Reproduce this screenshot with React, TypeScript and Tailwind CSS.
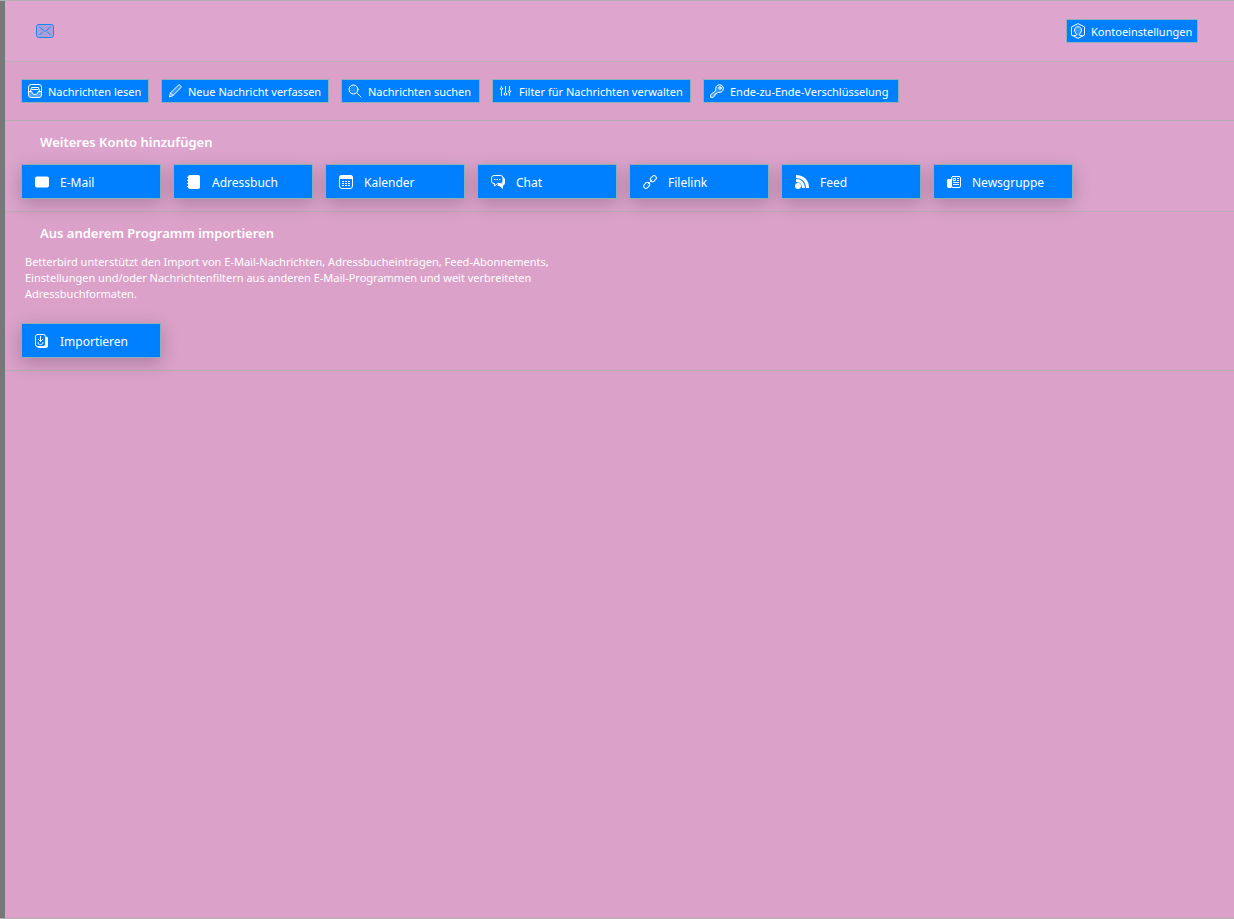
import { FC, ReactNode } from 'react';

interface IconProps {
    size?: number;
    children: ReactNode;
}

const Icon: FC<IconProps> = ({ size = 14, children }) => (
    <svg
        width={size}
        height={size}
        viewBox="0 0 14 14"
        fill="none"
        stroke="currentColor"
        strokeLinecap="round"
        strokeLinejoin="round"
        className="shrink-0"
        aria-hidden="true"
    >
        {children}
    </svg>
);

const InboxIcon = () => (
    <Icon>
        <rect x=".5" y=".5" width="13" height="13" rx="2.5" />
        <path d="M1 7.5h3c.2 2 1.4 3 3 3s2.800-1 3-3h3v4.500l-1.500 1.500h-9L1 12z" fill="currentColor" fillOpacity=".3" stroke="none" />
        <path d="M.8 7.500h3c.3 2 1.500 3 3.200 3s2.900-1 3.200-3h3M2.500 7l1-3.500h7l1 3.500M4 5.500h6" />
    </Icon>
);

const PencilIcon = () => (
    <Icon>
        <path d="M1.500 12.500l1-3.500 7.700-7.700c.6-.6 1.400-.6 2 0l.5.500c.6.600.6 1.400 0 2L5 11.500zM2.500 9L5 11.500" fill="currentColor" fillOpacity=".2" />
    </Icon>
);

const SearchIcon = () => (
    <Icon>
        <circle cx="5.500" cy="5.500" r="4.500" fill="currentColor" fillOpacity=".1" />
        <path d="M9 9l4 4" />
    </Icon>
);

const FilterIcon = () => (
    <Icon>
        <path d="M2.500 2.500v1M2.500 6v5.500M6.500 2.500v6M10.500 2.500v4M10.500 9v2.500" />
        <circle cx="2.500" cy="4.700" r="1.100" />
        <circle cx="6.500" cy="10" r="1.300" />
        <circle cx="10.500" cy="7.500" r="1.100" />
    </Icon>
);

const KeyIcon = () => (
    <Icon>
        <path d="M5.700 6.300C5.100 3.500 6.700.7 9.500.7c2.200 0 3.900 1.700 3.900 3.900 0 2.700-2.600 4.300-5.300 3.700L7 9.400H5.700v1.400H4.300v1.500l-1 1H.7v-2.200z" fill="currentColor" fillOpacity=".2" />
        <circle cx="10" cy="4" r="1.200" />
    </Icon>
);

const AccountIcon = () => (
    <svg width="14" height="16" viewBox="0 0 14 16" fill="none" stroke="currentColor" strokeLinejoin="round" className="shrink-0" aria-hidden="true">
        <path d="M7 .6l6.500 3.300v8.200L7 15.400.5 12.100V3.900z" />
        <path d="M2.500 12.500h2.500c.8-.3.900-1 .4-1.500C4.200 9.800 3.600 8.500 3.600 7c0-2 1.300-3.300 3.400-3.300S10.400 5 10.400 7c0 1.500-.6 2.800-1.800 4-.5.500-.4 1.200.4 1.500h2.500" fill="currentColor" fillOpacity=".2" />
    </svg>
);

const MailIcon = () => (
    <Icon>
        <rect y="1.500" width="14" height="11" rx="2" fill="currentColor" stroke="none" />
    </Icon>
);

const AddressBookIcon = () => (
    <Icon>
        <rect x="1" width="12" height="14" rx="2" fill="currentColor" stroke="none" />
        <path d="M.5 2.500h1M.5 5.500h1M.5 8.500h1M.5 11.500h1" />
    </Icon>
);

const CalendarIcon = () => (
    <Icon>
        <rect x=".5" y=".5" width="13" height="13" rx="2.500" />
        <path d="M0 4V3a3 3 0 013-3h8a3 3 0 013 3v1z" fill="currentColor" stroke="none" />
        <path d="M3 6.500h2M6 6.500h2M9 6.500h2M3 8.500h2M6 8.500h2M9 8.500h2M3 10.500h2M6 10.500h2M9 10.500h2" strokeLinecap="butt" />
    </Icon>
);

const ChatIcon = () => (
    <Icon>
        <path d="M12 2c1.300.5 2 1.500 2 3v2.500c0 1.700-.8 2.700-2 3V14l-3.500-3H6.500l.7-2H10c1.500 0 2-1 2-2.500z" fill="currentColor" stroke="none" />
        <path d="M3 .5h6.500A2.500 2.500 0 0112 3v3a2.500 2.500 0 01-2.500 2.500h-3L3.500 11V8.500H3A2.500 2.500 0 01.5 6V3A2.500 2.500 0 013 .5z" />
        <path d="M3 4.500h1.500M5.500 4.500H7M8 4.500h1.500" strokeLinecap="butt" />
    </Icon>
);

const LinkIcon = () => (
    <Icon>
        <rect x="-3.300" y="-2.200" width="6.600" height="4.400" rx="2.200" transform="translate(10.300 3.700) rotate(-45)" />
        <rect x="-3.300" y="-2.200" width="6.600" height="4.400" rx="2.200" transform="translate(3.700 10.300) rotate(-45)" />
        <path d="M5 9l4-4" />
    </Icon>
);

const FeedIcon = () => (
    <Icon>
        <circle cx="3" cy="11" r="3" fill="currentColor" stroke="none" />
        <path d="M1 5.500c4.700 0 7.500 2.800 7.500 7.500M1 1.500C8 1.500 12.500 6 12.500 13" strokeWidth="3" strokeLinecap="butt" />
    </Icon>
);

const NewsIcon = () => (
    <Icon>
        <path d="M4 4H1.500C.6 4 0 4.600 0 5.500V11c0 1.200.8 2 2 2h2.500z" fill="currentColor" stroke="none" />
        <rect x="4.500" y="1.500" width="9" height="11" rx="1.500" />
        <rect x="6.500" y="3.500" width="2" height="2" />
        <path d="M10 3.500h2M10 5.500h2M6 7.500h6M6 9.500h6" strokeLinecap="butt" />
    </Icon>
);

const ImportIcon = () => (
    <Icon>
        <path d="M11 2.500c1.300 0 2 .8 2 2V12c0 1.200-.8 2-2 2H4c-1.200 0-2-.7-2-2h7c1.300 0 2-.8 2-2z" fill="currentColor" stroke="none" />
        <rect x=".5" y=".5" width="10" height="12" rx="2" />
        <path d="M5.500 2.500v5M3.500 5.500l2 2 2-2M3 8.500c0 1.300.7 2 2.500 2s2.500-.7 2.500-2" />
    </Icon>
);

const QUICK_ACTIONS = [
    { label: 'Nachrichten lesen', icon: <InboxIcon />, width: 'w-[128px]' },
    { label: 'Neue Nachricht verfassen', icon: <PencilIcon />, width: 'w-[168px]' },
    { label: 'Nachrichten suchen', icon: <SearchIcon />, width: 'w-[139px]' },
    { label: 'Filter für Nachrichten verwalten', icon: <FilterIcon />, width: 'w-[199px]' },
    { label: 'Ende-zu-Ende-Verschlüsselung', icon: <KeyIcon />, width: 'w-[196px]' },
];

const ACCOUNT_TYPES = [
    { label: 'E-Mail', icon: <MailIcon /> },
    { label: 'Adressbuch', icon: <AddressBookIcon /> },
    { label: 'Kalender', icon: <CalendarIcon /> },
    { label: 'Chat', icon: <ChatIcon /> },
    { label: 'Filelink', icon: <LinkIcon /> },
    { label: 'Feed', icon: <FeedIcon /> },
    { label: 'Newsgruppe', icon: <NewsIcon /> },
];

interface TileProps {
    label: string;
    icon: ReactNode;
}

const Tile: FC<TileProps> = ({ label, icon }) => (
    <button
        type="button"
        className="flex h-[35px] w-[140px] items-center gap-[11px] border border-[#8fb0b8] bg-[#0080ff] pl-[13px] text-xs whitespace-nowrap shadow-[0_5px_18px_rgba(0,0,0,0.22)]"
    >
        {icon}
        <span className="pt-0.5">{label}</span>
    </button>
);

export default function App() {
    return (
        <div className="flex min-h-screen border-y border-[#b0b0b0] bg-[#dba1c9] font-['Noto_Sans','Open_Sans',sans-serif] text-white">
            <div className="w-[5px] shrink-0 bg-[#77787a]" />
            <main className="min-w-0 flex-1">
                <header className="flex h-[61px] items-center justify-between border-b border-[#bdabb7] bg-[#dea6cf] pr-9 pl-[31px]">
                    <svg width="18" height="14" viewBox="0 0 18 14" fill="none" stroke="#1a86f8" strokeLinecap="round" role="img" aria-label="E-Mail-Konto">
                        <rect x=".5" y=".5" width="17" height="13" rx="2" fill="#1a86f8" fillOpacity=".25" />
                        <path d="M3.500 3l4.300 3.800c.8.600 1.600.6 2.400 0L14.500 3M3.500 11l3-3M14.500 11l-3-3" />
                    </svg>
                    <button type="button" className="flex h-6 w-[132px] items-center gap-1.5 border border-[#8fb0b8] bg-[#0080ff] pl-1 text-[11px] whitespace-nowrap">
                        <AccountIcon />
                        <span className="pt-0.5">Kontoeinstellungen</span>
                    </button>
                </header>

                <nav className="flex flex-wrap gap-3 border-b border-[#b0b0b0] px-4 py-[17px]">
                    {QUICK_ACTIONS.map(({ label, icon, width }) => (
                        <button
                            key={label}
                            type="button"
                            className={`flex h-6 items-center gap-1.5 border border-[#8fb0b8] bg-[#0080ff] pl-1.5 text-[11px] whitespace-nowrap ${width}`}
                        >
                            {icon}
                            <span className="pt-0.5">{label}</span>
                        </button>
                    ))}
                </nav>

                <section className="border-b border-[#bdabb7] bg-[#dca4cc] px-4 pt-[11px] pb-3">
                    <h2 className="px-[19px] text-[13px] leading-5 font-semibold">Weiteres Konto hinzufügen</h2>
                    <div className="mt-3 flex flex-wrap gap-3">
                        {ACCOUNT_TYPES.map(({ label, icon }) => (
                            <Tile key={label} label={label} icon={icon} />
                        ))}
                    </div>
                </section>

                <section className="border-b border-[#b0b0b0] px-4 pt-[11px] pb-3">
                    <h2 className="px-[19px] text-[13px] leading-5 font-semibold">Aus anderem Programm importieren</h2>
                    <p className="mt-[11px] mb-[21px] max-w-[560px] px-1 text-[11px] leading-4">
                        Betterbird unterstützt den Import von E-Mail-Nachrichten, Adressbucheinträgen, Feed-Abonnements,
                        Einstellungen und/oder Nachrichtenfiltern aus anderen E-Mail-Programmen und weit verbreiteten
                        Adressbuchformaten.
                    </p>
                    <Tile label="Importieren" icon={<ImportIcon />} />
                </section>
            </main>
        </div>
    );
}
